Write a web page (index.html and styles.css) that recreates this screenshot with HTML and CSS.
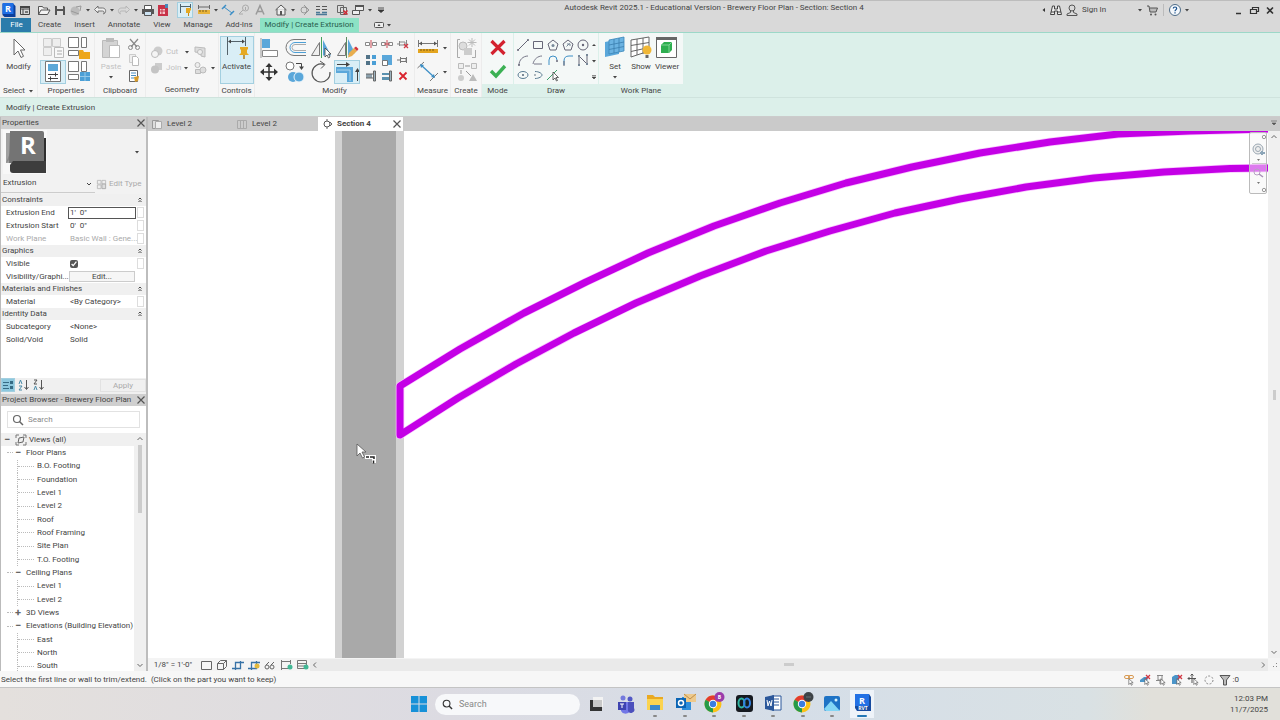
FILE: index.html
```html
<!DOCTYPE html>
<html lang="en">
<head>
  <meta charset="UTF-8">
  <meta name="viewport" content="width=device-width, initial-scale=1.0">
  <title>Autodesk Revit 2025.1 - Educational Version</title>
  <link rel="stylesheet" href="styles.css">
</head>
<body>
  <!-- shared symbols -->
  <svg class="sprite" aria-hidden="true">
    <symbol id="caret" viewBox="0 0 6 6"><path d="M1 2h4L3 4.500z" fill="#444"/></symbol>
    <symbol id="close" viewBox="0 0 10 10"><path d="M1.500 1.500l7 7M8.500 1.500l-7 7" stroke="#555" stroke-width="1.200"/></symbol>
    <symbol id="collapse" viewBox="0 0 6 8"><path d="M1.500 3.500L3 2l1.500 1.500M1.500 6L3 4.500 4.500 6" fill="none" stroke="#444"/></symbol>
    <symbol id="chrome" viewBox="0 0 24 24">
      <circle cx="11" cy="13" r="8.500" fill="#fbc116"/>
      <path d="M11 13L3.600 8.800A8.500 8.500 0 0 1 18.400 8.800z" fill="#e33b2e"/>
      <path d="M11 13L3.600 8.800A8.500 8.500 0 0 0 11 21.500z" fill="#269a48"/>
      <circle cx="11" cy="13" r="4.200" fill="#fff"/><circle cx="11" cy="13" r="3.200" fill="#3b7de0"/>
    </symbol>
    <symbol id="cursor" viewBox="0 0 8 11"><path d="M1 1v8l2-2 1.500 3 1.300-.7L4.500 6.500H7z" fill="#fff" stroke="#444" stroke-width=".8"/></symbol>
  </svg>

  <header class="title-bar">
    <div class="quick-access">
      <button class="app-logo" aria-label="Revit"><svg width="14" height="16" viewBox="0 0 14 16"><path d="M1 2h11l2 2v11H3l-2-2z" fill="#0b3f9c"/><path d="M1 1h11v11H1z" fill="#1f6fe5"/><text x="6.500" y="10" class="logo-letter">R</text></svg></button>
      <button aria-label="Home"><svg viewBox="0 0 16 16"><path d="M3.500 4.500h9v8h-9zM3.500 7h9M6 7v5" fill="none" stroke="#444"/><path d="M3 4h10v2H3z" fill="#444"/><path d="M8 9h3v2H8z" fill="#777"/></svg></button>
      <button class="spaced" aria-label="Open"><svg viewBox="0 0 16 16"><path d="M2.500 12.500v-8h4l1 1.500h4v2M2.500 12.500L5 8h9l-2.500 4.500z" fill="#f3f3f3" stroke="#555"/></svg></button>
      <button aria-label="Save"><svg viewBox="0 0 16 16"><path d="M3 4h9l1 1v8H3z" fill="#555"/><path d="M5 4h6v3H5zM5 9h6v4H5z" fill="#ddd"/></svg></button>
      <button aria-label="Synchronize"><svg viewBox="0 0 16 16"><circle cx="7" cy="9" r="4.500" fill="#bbb"/><path d="M8 5l5-1-1 5M3 9l8 3" fill="none" stroke="#999"/></svg></button>
      <button class="drop" aria-label="Sync options"><svg><use href="#caret"/></svg></button>
      <button aria-label="Undo"><svg viewBox="0 0 16 16"><path d="M6 4L2.500 7.500 6 11V9h4.500c2 0 2 2 1 3 3-1 3-6-1-6H6z" fill="#eee" stroke="#666" stroke-width=".9"/></svg></button>
      <button class="drop" aria-label="Undo list"><svg><use href="#caret"/></svg></button>
      <button aria-label="Redo"><svg viewBox="0 0 16 16"><path d="M10 4l3.500 3.500L10 11V9H5.500c-2 0-2 2-1 3-3-1-3-6 1-6H10z" fill="none" stroke="#b3b3b3" stroke-width=".9"/></svg></button>
      <button class="drop" aria-label="Redo list"><svg><use href="#caret"/></svg></button>
      <button aria-label="Print"><svg viewBox="0 0 16 16"><path d="M4.500 3.500h7v4h-7z" fill="#fff" stroke="#555"/><path d="M2 7h12v5H2z" fill="#555"/><path d="M4.500 9.500h7v4h-7z" fill="#cde3f3" stroke="#555"/></svg></button>
      <button aria-label="Export PDF"><svg viewBox="0 0 16 16"><path d="M2 3h8l2 2v9H2z" fill="#c83248"/><path d="M4 7h5v5H4z" fill="#f4c7cc"/><path d="M9 2h3v4H9z" fill="#4a86b8"/><path d="M6 7v5M4 9h5" stroke="#c83248"/></svg></button>
      <span class="sep"></span>
      <button class="on" aria-label="Activate dimensions"><svg viewBox="0 0 16 16"><path d="M3.500 2v9M13.500 2v4M4 4.500h9" stroke="#4c6470" fill="none"/><path d="M9 6h5v2l-1 1v2H9V9z" fill="#e5a922"/><path d="M11.500 11v3" stroke="#c28a1a"/></svg></button>
      <button class="spaced" aria-label="Measure"><svg viewBox="0 0 16 16"><path d="M2.500 3v4M13.500 3v4M3 5h10" stroke="#666"/><path d="M2 8h12v4H2z" fill="#e8b33a"/><path d="M4 8v2M7 8v2M10 8v2" stroke="#7b5d18"/></svg></button>
      <button class="drop" aria-label="Measure options"><svg><use href="#caret"/></svg></button>
      <button aria-label="Aligned dimension"><svg viewBox="0 0 16 16"><path d="M4 5l8 6" stroke="#3d8fc6"/><path d="M2 7l4-4M10 13l4-4" stroke="#3d8fc6" stroke-width="1.500"/></svg></button>
      <button aria-label="Tag by category"><svg viewBox="0 0 16 16"><circle cx="9.500" cy="6" r="3" fill="none" stroke="#aaa"/><path d="M9.500 5v3M3 12l4-4M3 12h4" stroke="#aaa"/></svg></button>
      <button aria-label="Text"><svg viewBox="0 0 16 16"><path d="M4 12.500L8 3.500l4 9M5.500 9.500h5" fill="none" stroke="#999" stroke-width="1.500"/></svg></button>
      <span class="sep"></span>
      <button aria-label="Default 3D view"><svg viewBox="0 0 16 16"><path d="M2.500 8L8 3l5.500 5M4 7v6h8V7" fill="#eee" stroke="#555"/><path d="M7 9h2v4H7z" fill="#555"/></svg></button>
      <button class="drop" aria-label="View options"><svg><use href="#caret"/></svg></button>
      <button aria-label="Section"><svg viewBox="0 0 16 16"><circle cx="7" cy="8" r="3" fill="none" stroke="#999"/><path d="M7 3l5 5-5 5" fill="none" stroke="#999"/></svg></button>
      <button aria-label="Thin lines"><svg viewBox="0 0 16 16"><path d="M3 4.500h4M9 4.500h5M3 7.500h4M9 7.500h5" stroke="#555"/><path d="M3 10.500h4M9 10.500h5M3 12.500h11" stroke="#4a7896" stroke-width="1.500"/></svg></button>
      <span class="sep"></span>
      <button aria-label="Close inactive views"><svg viewBox="0 0 16 16"><path d="M3.500 3.500h6v7h-6zM6.500 5.500h6v7h-6z" fill="#ddd" stroke="#666"/><path d="M9.500 8.500l4 4M13.500 8.500l-4 4" stroke="#d02a35" stroke-width="1.500"/></svg></button>
      <button aria-label="Switch windows"><svg viewBox="0 0 16 16"><path d="M5.500 3.500h8v5h-8zM2.500 8.500h7v4h-7z" fill="#eee" stroke="#555"/><path d="M5 3h9v2H5z" fill="#555"/></svg></button>
      <button class="drop" aria-label="Window list"><svg><use href="#caret"/></svg></button>
      <button class="drop wide" aria-label="Customize toolbar"><svg viewBox="0 0 8 8"><path d="M1 2h6M1 4h6L4 6.500z" stroke="#333" stroke-width=".8" fill="#333"/></svg></button>
    </div>
    <h1>Autodesk Revit 2025.1 - Educational Version - Brewery Floor Plan - Section: Section 4</h1>
    <div class="account">
      <button class="drop" aria-label="Collapse search"><svg viewBox="0 0 6 6"><path d="M4 1v4L1.500 3z" fill="#333"/></svg></button>
      <button aria-label="Search help"><svg viewBox="0 0 16 16"><path d="M4.500 4h2v3h3V4h2l2 8.500h-4V9h-3v3.500h-4zM3 10h3M10 10h3" fill="#f0f0f0" stroke="#444"/></svg></button>
      <button class="sign-in"><svg viewBox="0 0 16 16"><circle cx="8" cy="6" r="3" fill="none" stroke="#555"/><path d="M6.500 9v1.500L3 12v1.500h10V12l-3.500-1.500V9" fill="none" stroke="#555"/></svg>Sign In</button>
      <button class="drop" aria-label="Account menu"><svg><use href="#caret"/></svg></button>
      <button aria-label="App store"><svg viewBox="0 0 16 16"><path d="M3 4h2l1 6h6l1.500-4H6" fill="#bbb" stroke="#555"/><circle cx="7" cy="12.500" r="1" fill="#555"/><circle cx="11.500" cy="12.500" r="1" fill="#555"/></svg></button>
      <span class="sep line"></span>
      <button aria-label="Help"><svg viewBox="0 0 16 16"><circle cx="8" cy="8" r="5.500" fill="#f4f8fc" stroke="#4d6b86"/><path d="M6.300 6.500c0-2 3.400-2 3.400 0 0 1.300-1.700 1-1.700 2.700M8 10.200v1.300" fill="none" stroke="#174f8c" stroke-width="1.200"/></svg></button>
      <button class="drop" aria-label="Help menu"><svg><use href="#caret"/></svg></button>
      <div class="window-buttons">
        <button aria-label="Minimize"><svg viewBox="0 0 16 16"><path d="M6 11.500h5" stroke="#333" stroke-width="1.500"/></svg></button>
        <button aria-label="Restore"><svg viewBox="0 0 16 16"><path d="M6.500 7V5.500h6v4H11M4.500 7.500h6v4h-6z" fill="none" stroke="#333" stroke-width="1.200"/></svg></button>
        <button aria-label="Close"><svg viewBox="0 0 16 16"><path d="M5 5.500l6 6M11 5.500l-6 6" stroke="#333" stroke-width="1.600"/></svg></button>
      </div>
    </div>
  </header>

  <nav class="ribbon-tabs">
    <button class="file">File</button>
    <button>Create</button>
    <button>Insert</button>
    <button>Annotate</button>
    <button>View</button>
    <button>Manage</button>
    <button>Add-Ins</button>
    <button class="active">Modify | Create Extrusion</button>
    <button class="ribbon-toggle" aria-label="Minimize ribbon"><svg viewBox="0 0 18 8"><rect x="1.500" y="1.500" width="9" height="5" rx="1" fill="#eee" stroke="#555"/><path d="M4.500 5L6 3l1.500 2zM14 3h4l-2 2.500z" fill="#444"/></svg></button>
  </nav>

  <section class="ribbon">
    <div class="panel select-panel">
      <div class="tools">
        <button class="big"><svg viewBox="0 0 26 24"><path d="M8 3v16l4-4 3 6.500 2.500-1.200L14.500 14H19z" fill="#fff" stroke="#666"/></svg>Modify</button>
      </div>
      <h2>Select <svg class="mini"><use href="#caret"/></svg></h2>
    </div>

    <div class="panel">
      <div class="tools cols-2">
        <button aria-label="Type properties"><svg viewBox="0 0 26 24"><path d="M3.500 2.500h8v8h-8zM12.500 2.500h8v8h-8zM3.500 11.500h8v8h-8z" fill="#eee" stroke="#ccc"/><path d="M14.500 11.500h9v10h-9z" fill="#f8f8f8" stroke="#bbb"/><path d="M17 15h5M17 18h5" stroke="#aaa"/></svg></button>
        <button aria-label="Family category"><svg viewBox="0 0 26 24"><path d="M2.500 1.500h10v10h-10zM15.500 1.500h5v10h-5zM2.500 14.500h10v5h-10z" fill="#fff" stroke="#777"/><path d="M13 14h4l1 2h6v7H13z" fill="#eda71b"/></svg></button>
        <button class="on" aria-label="Properties"><svg viewBox="0 0 26 24"><path d="M5.500 1.500h15v20h-15z" fill="#fff" stroke="#777"/><path d="M8 4h10v7H8z" fill="#5ba8d8"/><path d="M8 14.500h10M8 18.500h10M15.500 12.500v4M10.500 16.500v4" stroke="#444"/></svg></button>
        <button aria-label="Family types"><svg viewBox="0 0 26 24"><path d="M2.500 1.500h10v10h-10zM15.500 1.500h5v10h-5zM2.500 14.500h10v5h-10z" fill="#fff" stroke="#777"/><path d="M14 12h10v9H14z" fill="#4b9fd6"/><path d="M19 12v9M14 16.500h10" stroke="#94c8e8"/></svg></button>
      </div>
      <h2>Properties</h2>
    </div>

    <div class="panel clipboard">
      <div class="tools">
        <button class="big muted"><svg viewBox="0 0 26 24"><path d="M4.500 4.500h15v17h-15z" fill="#d4d4d4" stroke="#bbb"/><path d="M8 2h8v4H8z" fill="#bbb"/><path d="M11.500 9.500h10v12h-10z" fill="#fff" stroke="#bbb"/></svg>Paste<svg class="mini"><use href="#caret"/></svg></button>
        <div class="stack">
          <button aria-label="Cut"><svg viewBox="0 0 16 16"><path d="M4 3l7 8M12 3l-7 8" stroke="#888" stroke-width="1.200"/><circle cx="4.500" cy="11.500" r="2" fill="none" stroke="#888"/><circle cx="11.500" cy="11.500" r="2" fill="none" stroke="#888"/></svg></button>
          <button aria-label="Copy"><svg viewBox="0 0 16 16"><path d="M3.500 2.500h6v8h-6z" fill="#eee" stroke="#ccc"/><path d="M6.500 4.500h4l2 2v7h-6z" fill="#fff" stroke="#bbb"/></svg></button>
          <button aria-label="Match type"><svg viewBox="0 0 16 16"><path d="M3.500 2.500h8v11h-8z" fill="#fff" stroke="#666"/><path d="M5 5h5M5 7.500h5M5 10h3" stroke="#4b8fc0"/><path d="M8 9l5-1-1 5-3 1z" fill="#d79b2a"/></svg></button>
        </div>
      </div>
      <h2>Clipboard</h2>
    </div>

    <div class="panel geometry">
      <div class="tools rows">
        <div class="tool-row muted">
          <button class="labelled"><svg viewBox="0 0 16 16"><circle cx="9" cy="7" r="4.500" fill="#ccc"/><circle cx="6" cy="10" r="3.500" fill="#f4f4f4" stroke="#bbb"/></svg>Cut</button>
          <button class="drop" aria-label="Cut options"><svg><use href="#caret"/></svg></button>
          <button aria-label="Cope"><svg viewBox="0 0 16 16"><path d="M3 3l10 1v9l-4-1V9L3 8z" fill="#ddd" stroke="#bbb"/><circle cx="8" cy="8" r="2.500" fill="#eee" stroke="#bbb"/></svg></button>
        </div>
        <div class="tool-row muted">
          <button class="labelled"><svg viewBox="0 0 16 16"><path d="M6 3h7v7H6z" fill="#ccc"/><circle cx="6" cy="9.500" r="4" fill="#c4c4c4"/></svg>Join</button>
          <button class="drop" aria-label="Join options"><svg><use href="#caret"/></svg></button>
          <button aria-label="Split face"><svg viewBox="0 0 16 16"><circle cx="5.500" cy="5" r="2.500" fill="#eee" stroke="#bbb"/><path d="M3.500 9.500h5v4h-5z" fill="#ddd" stroke="#bbb"/><circle cx="11" cy="10" r="3" fill="#ddd" stroke="#bbb"/></svg></button>
          <button class="drop" aria-label="Split options"><svg><use href="#caret"/></svg></button>
        </div>
      </div>
      <h2>Geometry</h2>
    </div>

    <div class="panel controls-panel">
      <div class="tools">
        <button class="big on"><svg viewBox="0 0 26 24"><path d="M3.500 1v18M21.500 1v9M5 5.500h15" stroke="#55636b" fill="none"/><path d="M4 5.500l3-2v4zM21 5.500l-3-2v4z" fill="#444"/><path d="M16 11h8v2l-1 1v3l2 2H15l2-2v-3l-1-1z" fill="#e5a922"/><path d="M20 19v4" stroke="#b07e17" stroke-width="1.500"/></svg>Activate</button>
      </div>
      <h2>Controls</h2>
    </div>

    <div class="panel modify-panel">
      <div class="tools">
        <div class="cols-4">
          <button aria-label="Align"><svg viewBox="0 0 26 24"><path d="M5 2v20" stroke="#999"/><path d="M6 3h8v9H6z" fill="#5aa7da"/><path d="M6.500 14.500h15v6h-15z" fill="#fff" stroke="#888"/></svg></button>
          <button aria-label="Offset"><svg viewBox="0 0 26 24"><path d="M24 3.500H12a8 8 0 0 0 0 16h12" fill="none" stroke="#777"/><path d="M24 6.500H13a5 5 0 0 0 0 10h11" fill="none" stroke="#4b9fd6"/><path d="M24 8.500H13a3 3 0 0 0 0 6h11" fill="none" stroke="#aaa"/></svg></button>
          <button aria-label="Mirror pick axis"><svg viewBox="0 0 26 24"><path d="M3.500 19.500l8-13v13z" fill="#eee" stroke="#777"/><path d="M15 19.500V4l8 15.500z" fill="#5aa7da"/><path d="M13.500 1v21" stroke="#44a05b"/><path d="M17 12v9l2-2 1.500 3 1.500-1-1.500-3H23z" fill="#fff" stroke="#444" stroke-width=".8"/></svg></button>
          <button aria-label="Mirror draw axis"><svg viewBox="0 0 26 24"><path d="M3.500 19.500l8-13v13z" fill="#eee" stroke="#777"/><path d="M14 19.500V3l7 14z" fill="#5aa7da"/><path d="M12.500 1v21" stroke="#5a8a60"/><path d="M20 12l3 3-5 5-4 1.500 1-4.500z" fill="#e8ad4e"/><path d="M20 12l3 3 1.500-2-2.500-2.500z" fill="#d4313b"/></svg></button>
          <button aria-label="Move"><svg viewBox="0 0 26 24"><path d="M13 5v14M6 12h14" stroke="#333" stroke-width="1.500"/><path d="M13 3l3.500 4h-7zM13 21l3.500-4h-7zM4 12l4-3.500v7zM22 12l-4-3.500v7z" fill="#333"/></svg></button>
          <button aria-label="Copy"><svg viewBox="0 0 26 24"><circle cx="8" cy="6" r="4" fill="#fff" stroke="#777"/><path d="M14 3.500h5.500V7" fill="none" stroke="#444"/><path d="M17 6.500h5L19.500 10z" fill="#444"/><circle cx="11" cy="17" r="5" fill="#5aa7da"/><circle cx="17" cy="17" r="5" fill="#5aa7da" stroke="#e8f4fb"/></svg></button>
          <button aria-label="Rotate"><svg viewBox="0 0 26 24"><path d="M16 4.500a9 9 0 1 0 6 7.500" fill="none" stroke="#555" stroke-width="1.200"/><path d="M12 1l5 3.500-4 4" fill="none" stroke="#555"/></svg></button>
          <button class="on" aria-label="Trim or extend to corner"><svg viewBox="0 0 26 24"><path d="M3 4.500h10M23.500 11v10" stroke="#444"/><path d="M2 7h17v15h-6v-9H2z" fill="#5aa7da"/><path d="M3 10h13v11" fill="none" stroke="#abd5ed"/><path d="M12 2l4 2.500-4 2.500zM21 12l2.500-4 2.500 4z" fill="#444"/></svg></button>
        </div>
        <div class="cols-3">
          <button aria-label="Split element"><svg viewBox="0 0 16 16"><path d="M2.500 6.500h4v3h-4zM9.500 6.500h4v3h-4z" fill="#fff" stroke="#888"/><path d="M8 4v8" stroke="#cc4a55"/></svg></button>
          <button aria-label="Split with gap"><svg viewBox="0 0 16 16"><path d="M2.500 6.500h4v3h-4zM9.500 6.500h4v3h-4z" fill="#fff" stroke="#888"/><path d="M8 4v8M5 8h6" stroke="#cc4a55"/></svg></button>
          <button aria-label="Unpin"><svg viewBox="0 0 16 16"><path d="M4.500 5v5M5 6h5v3H5M11.500 4v6M2 8h3" fill="none" stroke="#888"/><path d="M9 8l4 4M13 8l-4 4" stroke="#d13743" stroke-width="1.300"/></svg></button>
          <button aria-label="Array"><svg viewBox="0 0 16 16"><path d="M3 3h4v4H3zM3 9h4v4H3z" fill="#527388"/><path d="M9 3h4v4H9zM9 9h4v4H9z" fill="#4b9fd6"/></svg></button>
          <button aria-label="Scale"><svg viewBox="0 0 16 16"><path d="M3 3h10v10H3z" fill="#5aa7da"/><path d="M3.500 8.500h5v5h-5z" fill="#fff" stroke="#777"/></svg></button>
          <button aria-label="Pin"><svg viewBox="0 0 16 16"><path d="M5.500 5v6M6 6.500h5v3H6M11.500 5v6M2 8h3" fill="none" stroke="#777"/></svg></button>
          <button aria-label="Trim single"><svg viewBox="0 0 16 16"><path d="M3 6h6v4H3z" fill="#8da1ad"/><path d="M3 6h8M3 10h8" stroke="#666"/><path d="M10.500 3h2v10h-2z" fill="#9db3bf" stroke="#666"/></svg></button>
          <button aria-label="Trim multiple"><svg viewBox="0 0 16 16"><path d="M3 5h7v2H3zM3 9h7v3H3z" fill="#5b91af"/><path d="M10.500 3h2v10h-2z" fill="#9db3bf" stroke="#666"/></svg></button>
          <button aria-label="Delete"><svg viewBox="0 0 16 16"><path d="M4.500 4.500l7 7M11.500 4.500l-7 7" stroke="#d9232e" stroke-width="1.800"/></svg></button>
        </div>
      </div>
      <h2>Modify</h2>
    </div>

    <div class="panel measure">
      <div class="tools rows">
        <div class="tool-row">
          <button aria-label="Measure between"><svg viewBox="0 0 26 24"><path d="M3.500 4v7M22.500 4v7M4 7.500h18" stroke="#777"/><path d="M4 7.500l3-2v4zM22 7.500l-3-2v4z" fill="#555"/><path d="M3 13h20v4H3z" fill="#e4a51f"/><path d="M6 13v2M9 13v2M12 13v2M15 13v2M18 13v2" stroke="#7c5a12"/></svg></button>
          <button class="drop" aria-label="Measure menu"><svg><use href="#caret"/></svg></button>
        </div>
        <div class="tool-row">
          <button aria-label="Dimension"><svg viewBox="0 0 26 24"><path d="M6 5l13 12" stroke="#3d8fc6" stroke-width="1.300"/><path d="M2.500 8L9 2M15 21l8-8" stroke="#777"/><path d="M5 4l4 1-3 3zM20 18l-4-1 3-3z" fill="#3d8fc6"/></svg></button>
          <button class="drop" aria-label="Dimension menu"><svg><use href="#caret"/></svg></button>
        </div>
      </div>
      <h2>Measure</h2>
    </div>

    <div class="panel create-panel">
      <div class="tools rows">
        <button aria-label="Create group"><svg viewBox="0 0 26 24"><path d="M7 3.500H4.500v18H7M19 21.500h3.500V14" fill="none" stroke="#aaa"/><circle cx="10" cy="10" r="4" fill="#ddd" stroke="#bbb"/><path d="M11 12h8v7h-8z" fill="#ccc"/><path d="M19 2v9M14.500 6.500h9M16 3.500l6 6M22 3.500l-6 6" stroke="#bbb"/></svg></button>
        <button aria-label="Create similar"><svg viewBox="0 0 26 24"><path d="M5.500 3.500h5v5h-5zM18.500 3.500h5v5h-5z" fill="#eee" stroke="#bbb"/><path d="M12 6h5M8 10v4M13 11l5 5" stroke="#999"/><circle cx="8" cy="18" r="3" fill="#ccc"/><path d="M20 14l4 7h-8z" fill="#bbb"/></svg></button>
      </div>
      <h2>Create</h2>
    </div>

    <div class="panel context mode">
      <div class="tools rows">
        <button aria-label="Cancel edit mode"><svg viewBox="0 0 26 24"><path d="M6.500 5l13 13M19.500 5l-13 13" stroke="#d3222f" stroke-width="3.200"/></svg></button>
        <button aria-label="Finish edit mode"><svg viewBox="0 0 26 24"><path d="M6 11l5 5L20 6" fill="none" stroke="#3bb154" stroke-width="3.400"/></svg></button>
      </div>
      <h2>Mode</h2>
    </div>

    <div class="panel context draw">
      <div class="tools">
        <div class="draw-gallery">
          <button aria-label="Line"><svg viewBox="0 0 14 14"><path d="M2 12L12 2" stroke="#667"/><circle cx="2" cy="12" r="1" fill="#667"/><circle cx="12" cy="2" r="1" fill="#667"/></svg></button>
          <button aria-label="Rectangle"><svg viewBox="0 0 14 14"><path d="M2.500 3.500h9v7h-9z" fill="none" stroke="#667"/></svg></button>
          <button aria-label="Inscribed polygon"><svg viewBox="0 0 14 14"><path d="M7 2l5 4-2 6H4L2 6z" fill="none" stroke="#667"/><circle cx="7" cy="7.500" r="1.500" fill="#789"/></svg></button>
          <button aria-label="Circumscribed polygon"><svg viewBox="0 0 14 14"><path d="M7 2l5 4-2 6H4L2 6z" fill="none" stroke="#667"/><path d="M5.500 8.500l3-3M6 6h3v2" fill="none" stroke="#789"/></svg></button>
          <button aria-label="Circle"><svg viewBox="0 0 14 14"><circle cx="7" cy="7" r="5" fill="none" stroke="#667"/><circle cx="7" cy="7" r="1.200" fill="#667"/></svg></button>
          <button aria-label="Start-end-radius arc"><svg viewBox="0 0 14 14"><path d="M3 12c0-5 4-9 9-9" fill="none" stroke="#778"/><circle cx="3" cy="12" r="1" fill="#667"/></svg></button>
          <button aria-label="Center-ends arc"><svg viewBox="0 0 14 14"><path d="M2 11c1-5 5-8 9-8M3 11h8" fill="none" stroke="#778"/></svg></button>
          <button aria-label="Tangent end arc"><svg viewBox="0 0 14 14"><path d="M3 12V7a4 4 0 0 1 8 0" fill="none" stroke="#3d8fc6"/><circle cx="11" cy="8" r="1" fill="#667"/></svg></button>
          <button aria-label="Fillet arc"><svg viewBox="0 0 14 14"><path d="M3 12V8q0-5 5-5h4" fill="none" stroke="#3d8fc6"/><path d="M3 8v5" stroke="#667"/></svg></button>
          <button aria-label="Spline"><svg viewBox="0 0 14 14"><path d="M3 12V3l8 8V2" fill="none" stroke="#667" stroke-linejoin="round"/><path d="M2 11h2v2H2zM2 2h2v2H2zM10 10h2v2h-2zM10 1h2v2h-2z" fill="#789"/></svg></button>
          <button aria-label="Ellipse"><svg viewBox="0 0 14 14"><ellipse cx="7" cy="7" rx="5" ry="3.500" fill="none" stroke="#5a7c93"/><circle cx="7" cy="7" r="1" fill="#567"/></svg></button>
          <button aria-label="Partial ellipse"><svg viewBox="0 0 14 14"><path d="M4 3.500c4 0 7 2 7 3.500s-3 3.500-7 3.500" fill="none" stroke="#5a7c93"/><circle cx="4" cy="7" r=".8" fill="#567"/></svg></button>
          <button aria-label="Pick lines"><svg viewBox="0 0 14 14"><path d="M1 12l10-10" stroke="#3fa06b"/><path d="M7 4v8l2-2 1.500 3 1-.5L10 9.500h2.500z" fill="#fff" stroke="#444" stroke-width=".8"/></svg></button>
        </div>
        <div class="gallery-scroll">
          <button aria-label="Scroll up"><svg viewBox="0 0 6 6"><path d="M1 4h4L3 2z" fill="#444"/></svg></button>
          <button aria-label="Scroll down"><svg><use href="#caret"/></svg></button>
          <button aria-label="More"><svg viewBox="0 0 6 6"><path d="M1 1.500h4M1 3h4L3 5z" fill="#444" stroke="#444" stroke-width=".6"/></svg></button>
        </div>
      </div>
      <h2>Draw</h2>
    </div>

    <div class="panel context work-plane">
      <div class="tools">
        <button class="big"><svg viewBox="0 0 26 24"><path d="M3 6l14-3v15L3 21z" fill="#5aa7da"/><path d="M7 4l15-3v14L7 18z" fill="#6bb3e2" stroke="#3a86ba" stroke-width=".8"/><path d="M12 3v14M17 2v14M7 9l15-3M7 13.500l15-3" stroke="#3a7eae" stroke-width=".8"/></svg>Set<svg class="mini"><use href="#caret"/></svg></button>
        <button class="big"><svg viewBox="0 0 26 24"><path d="M3 4l18-3v14L3 21zM9 3v16M15 2v16M3 9.500l18-3M3 15.500l18-4" fill="#fff" stroke="#666"/><circle cx="19" cy="14" r="4.500" fill="#f0b736"/><path d="M17.500 19h3v3h-3z" fill="#666"/></svg>Show</button>
        <button class="big"><svg viewBox="0 0 26 24"><path d="M2.500 1.500h20v20h-20z" fill="#fff" stroke="#666"/><path d="M2 1h21v3H2z" fill="#666"/><path d="M7 9l3-3h8v8l-3 3H7z" fill="#2eae50"/><path d="M7 9h8v8M15 9l3-3" fill="none" stroke="#7ed695"/></svg>Viewer</button>
      </div>
      <h2>Work Plane</h2>
    </div>
  </section>

  <div class="options-bar">Modify | Create Extrusion</div>

  <main>
    <aside>
      <section class="properties">
        <header class="dock-title">Properties <button aria-label="Close properties"><svg><use href="#close"/></svg></button></header>
        <div class="type-preview">
          <svg width="44" height="44" viewBox="0 0 44 44"><path d="M0 0h44v44H0z" fill="#f8f8f8"/><path d="M3 3h5v30H3z" fill="#a0a0a0"/><path d="M3 33L8 28v-8z" fill="#888"/><path d="M36 8h7v35h-7z" fill="#2f2f2f"/><path d="M7 1h32a2 2 0 0 1 2 2v30H6z" fill="#747474"/><path d="M10 31h33v12H10a3 3 0 0 1-3-3v-5z" fill="#3d3d3d"/><text x="25" y="24" class="preview-letter">R</text></svg>
          <svg class="mini"><use href="#caret"/></svg>
        </div>
        <div class="type-row">
          <select aria-label="Family type"><option>Extrusion</option></select>
          <button disabled><svg viewBox="0 0 12 12"><path d="M1.500 1.500h4v4h-4zM6.500 1.500h4v4h-4zM1.500 6.500h4v4h-4z" fill="#eee" stroke="#bbb"/><path d="M6.500 5.500h4v5h-4z" fill="#ddd" stroke="#aaa"/></svg>Edit Type</button>
        </div>
        <table>
          <colgroup><col class="name-col"><col><col class="link-col"></colgroup>
          <tr class="group"><th colspan="2">Constraints</th><td><svg><use href="#collapse"/></svg></td></tr>
          <tr><th><label for="extrusion-end">Extrusion End</label></th><td class="field"><input id="extrusion-end" class="focused" type="text" value="1'  0&quot;"></td><td><i></i></td></tr>
          <tr><th><label for="extrusion-start">Extrusion Start</label></th><td class="field"><input id="extrusion-start" type="text" value="0'  0&quot;"></td><td><i></i></td></tr>
          <tr class="disabled"><th>Work Plane</th><td>Basic Wall : Gene...</td><td><i></i></td></tr>
          <tr class="group"><th colspan="2">Graphics</th><td><svg><use href="#collapse"/></svg></td></tr>
          <tr><th><label for="visible">Visible</label></th><td><input id="visible" type="checkbox" checked></td><td><i></i></td></tr>
          <tr><th>Visibility/Graphi...</th><td class="field"><button>Edit...</button></td><td></td></tr>
          <tr class="group"><th colspan="2">Materials and Finishes</th><td><svg><use href="#collapse"/></svg></td></tr>
          <tr><th>Material</th><td>&lt;By Category&gt;</td><td><i></i></td></tr>
          <tr class="group"><th colspan="2">Identity Data</th><td><svg><use href="#collapse"/></svg></td></tr>
          <tr><th>Subcategory</th><td>&lt;None&gt;</td><td></td></tr>
          <tr><th>Solid/Void</th><td>Solid</td><td></td></tr>
        </table>
        <footer>
          <button class="sort on" aria-label="Group by category"><svg viewBox="0 0 14 14"><path d="M2 4.500h6M2 7.500h5M2 10.500h6" stroke="#356b84"/><path d="M9 3h3v3H9zM9 8h3v3H9z" fill="#356b84"/></svg></button>
          <button class="sort" aria-label="Sort ascending"><svg viewBox="0 0 14 14"><path d="M3 6l1.500-4L6 6M3 8h3l-3 4h3" fill="none" stroke="#4a8ba8"/><path d="M10.500 2v9M8.500 9l2 2.500 2-2.500" fill="none" stroke="#555"/></svg></button>
          <button class="sort" aria-label="Sort descending"><svg viewBox="0 0 14 14"><path d="M3 2h3L3 6h3" fill="none" stroke="#555"/><path d="M3 12l1.500-4L6 12" fill="none" stroke="#4a8ba8"/><path d="M10.500 2v9M8.500 9l2 2.500 2-2.500" fill="none" stroke="#555"/></svg></button>
          <button class="apply" disabled>Apply</button>
        </footer>
      </section>

      <section class="browser">
        <header class="dock-title">Project Browser - Brewery Floor Plan <button aria-label="Close project browser"><svg><use href="#close"/></svg></button></header>
        <label class="browser-search">
          <svg viewBox="0 0 12 12"><circle cx="5" cy="5" r="3.500" fill="none" stroke="#666" stroke-width="1.200"/><path d="M7.500 7.500l3.500 3.500" stroke="#666" stroke-width="1.500"/></svg>
          <input type="search" placeholder="Search" aria-label="Search project browser">
        </label>
        <div class="tree-wrap">
          <ul class="tree">
            <li class="root"><b>−</b><svg viewBox="0 0 12 12"><path d="M1 4V1h3M8 1h3v3M11 8v3H8M4 11H1V8" fill="none" stroke="#777"/><path d="M4 4l5-1-1 5-5 1z" fill="#eee" stroke="#666"/></svg>Views (all)</li>
            <li class="branch"><b>−</b>Floor Plans</li>
            <li class="leaf">B.O. Footing</li>
            <li class="leaf">Foundation</li>
            <li class="leaf">Level 1</li>
            <li class="leaf">Level 2</li>
            <li class="leaf">Roof</li>
            <li class="leaf">Roof Framing</li>
            <li class="leaf">Site Plan</li>
            <li class="leaf">T.O. Footing</li>
            <li class="branch"><b>−</b>Ceiling Plans</li>
            <li class="leaf">Level 1</li>
            <li class="leaf">Level 2</li>
            <li class="branch"><b>+</b>3D Views</li>
            <li class="branch"><b>−</b>Elevations (Building Elevation)</li>
            <li class="leaf">East</li>
            <li class="leaf">North</li>
            <li class="leaf">South</li>
          </ul>
          <div class="scrollbar">
            <svg viewBox="0 0 10 10"><path d="M2.500 6L5 3.500 7.500 6" fill="none" stroke="#666"/></svg>
            <span class="thumb"></span>
            <svg viewBox="0 0 10 10"><path d="M2.500 4L5 6.500 7.500 4" fill="none" stroke="#666"/></svg>
          </div>
        </div>
      </section>
    </aside>

    <section class="views">
      <nav class="view-tabs">
        <button><svg viewBox="0 0 12 12"><path d="M1.500 2.500h6v8h-6z" fill="#ddd" stroke="#999"/><path d="M4.500 3.500h6v7h-6z" fill="#eee" stroke="#aaa"/></svg>Level 2</button>
        <button><svg viewBox="0 0 12 12"><path d="M1.500 2.500h9v8h-9z" fill="#ccc" stroke="#aaa"/><path d="M4.500 2v9M7.500 2v9" stroke="#aaa"/></svg>Level 2</button>
        <button class="active"><svg viewBox="0 0 12 12"><circle cx="6" cy="6" r="3" fill="none" stroke="#555"/><path d="M6 1v2M6 9v2M9 4l2 2-2 2" fill="none" stroke="#666"/></svg>Section 4<span class="tab-close"><svg><use href="#close"/></svg></span></button>
        <svg class="tab-list" viewBox="0 0 8 8"><path d="M1 2h6M2 4h4L4 6z" fill="#555" stroke="#555" stroke-width=".6"/></svg>
      </nav>
      <div class="canvas-row">
        <div class="canvas">
          <svg class="drawing" viewBox="148 131 1120 527" preserveAspectRatio="xMinYMin slice">
            <!-- wall in section -->
            <path d="M335 131h69v527h-69z" fill="#d2d2d2"/>
            <path d="M342 131h54v527h-54z" fill="#a9a9a9"/>
            <!-- extrusion sketch -->
            <path d="M1268 129L1190 131 1118 134 1050 142 980 153 912 167 846 183 780 203 714 226 648 253 586 282 524 313 460 349 400 386V435L458 398 516 364 574 333 636 303 700 276 766 251 830 231 895 213 960 199 1026 187 1094 178 1164 172 1230 168.500 1280 168" fill="none" stroke="#f9c3ff" stroke-width="8.500" stroke-linejoin="round"/>
            <path d="M1268 129L1190 131 1118 134 1050 142 980 153 912 167 846 183 780 203 714 226 648 253 586 282 524 313 460 349 400 386V435L458 398 516 364 574 333 636 303 700 276 766 251 830 231 895 213 960 199 1026 187 1094 178 1164 172 1230 168.500 1280 168" fill="none" stroke="#c400e6" stroke-width="7" stroke-linejoin="round"/>
            <!-- trim cursor -->
            <path d="M357 444v12l3-3 2.500 5 2-1-2.500-5h4z" fill="#fff" stroke="#555" stroke-width=".8"/>
            <path d="M365 457h9v6" fill="none" stroke="#fff" stroke-width="4"/>
            <path d="M366 457h3M370 457h4v2M373.500 460.500v3" fill="none" stroke="#222" stroke-width="1.500"/>
          </svg>
          <div class="nav-bar">
            <svg viewBox="0 0 18 60"><circle cx="14" cy="4" r="1.700" fill="none" stroke="#999"/><circle cx="8" cy="16" r="5" fill="#eee" stroke="#9aa7b2"/><circle cx="8" cy="16" r="2.500" fill="none" stroke="#9aa7b2"/><path d="M10 20h5M12 18v4" stroke="#8da6b8" stroke-width="2"/><path d="M7 26h3l-1.500 2zM7 49h3l-1.500 2z" fill="#777"/><path d="M2 30.500h14" stroke="#ccc"/><circle cx="7" cy="39" r="3" fill="none" stroke="#b7a1c4"/><path d="M9 41l4 3" stroke="#a992b8" stroke-width="1.500"/><circle cx="14" cy="57" r="1.700" fill="none" stroke="#999"/></svg>
          </div>
        </div>
        <div class="scrollbar canvas-scroll">
          <svg viewBox="0 0 10 10"><path d="M2.500 6L5 3.500 7.500 6" fill="none" stroke="#666"/></svg>
          <span class="grip"></span>
          <svg viewBox="0 0 10 10"><path d="M2.500 4L5 6.500 7.500 4" fill="none" stroke="#666"/></svg>
        </div>
      </div>
      <div class="view-controls">
        <button class="scale">1/8" = 1'-0"</button>
        <button aria-label="Detail level"><svg viewBox="0 0 16 14"><path d="M3.500 3.500h10v8h-10z" fill="#f6f6f6" stroke="#666"/></svg></button>
        <button aria-label="Visual style"><svg viewBox="0 0 16 14"><path d="M3.500 5.500h6v6h-6zM3.500 5.500l3-3h6v6l-3 3M9.500 5.500l3-3" fill="none" stroke="#666"/></svg></button>
        <button aria-label="Crop view"><svg viewBox="0 0 16 14"><path d="M5.500 12V4.500H14M2 10.500h8.500V3" fill="none" stroke="#3772a6" stroke-width="1.300"/></svg></button>
        <button aria-label="Show crop region"><svg viewBox="0 0 16 14"><path d="M5.500 12V4.500H14M2 10.500h8.500V3" fill="none" stroke="#3772a6" stroke-width="1.300"/><circle cx="11" cy="8" r="2.500" fill="#e2b93c"/></svg></button>
        <button aria-label="Temporary hide"><svg viewBox="0 0 16 14"><circle cx="5" cy="9" r="2" fill="none" stroke="#666"/><circle cx="10" cy="9" r="2" fill="none" stroke="#666"/><path d="M4 7l3-3M9 7l3-3" stroke="#666"/></svg></button>
        <button aria-label="Reveal hidden"><svg viewBox="0 0 16 14"><path d="M3.500 3.500h9M3.500 10.500h7M3.500 2v10M12.500 2v4" fill="none" stroke="#777"/><circle cx="12" cy="9" r="2.500" fill="#42b795"/></svg></button>
        <button aria-label="View properties"><svg viewBox="0 0 16 14"><path d="M3.500 2.500h9v8h-9zM3 5.500h9M3 8h9" fill="none" stroke="#777"/><circle cx="12" cy="9" r="2.500" fill="#42b795"/></svg></button>
        <div class="h-scroll">
          <svg viewBox="0 0 10 10"><path d="M6 2.500L3.500 5 6 7.500" fill="none" stroke="#666"/></svg>
          <span class="grip"></span>
          <svg viewBox="0 0 10 10"><path d="M4 2.500L6.500 5 4 7.500" fill="none" stroke="#666"/></svg>
        </div>
        <svg class="corner" viewBox="0 0 12 12"><path d="M8 4h1v1H8zM5 7h1v1H5zM8 7h1v1H8z" fill="#888"/></svg>
      </div>
    </section>
  </main>

  <footer class="status-bar">
    <p>Select the first line or wall to trim/extend.&nbsp; (Click on the part you want to keep)</p>
    <button aria-label="Select links"><svg viewBox="0 0 16 16"><rect x="3.500" y="3.500" width="5" height="3" rx="1.500" fill="none" stroke="#d99a52"/><rect x="7.500" y="3.500" width="5" height="3" rx="1.500" fill="none" stroke="#d99a52"/><use href="#cursor" x="7" y="6" width="6" height="8"/></svg></button>
    <button aria-label="Select underlay"><svg viewBox="0 0 16 16"><path d="M3 8l4-3h4l-1 5H3z" fill="#4b95c9"/><path d="M9 3l4 4M13 3L9 7" stroke="#d13743" stroke-width="1.300"/><use href="#cursor" x="7" y="6" width="6" height="8"/></svg></button>
    <button aria-label="Select pinned"><svg viewBox="0 0 16 16"><path d="M4 3.500h6M5 4v4h4V4M3 8.500h7M7 9v3" fill="none" stroke="#888"/><use href="#cursor" x="7" y="6" width="6" height="8"/></svg></button>
    <button aria-label="Select by face"><svg viewBox="0 0 16 16"><path d="M3 5l3-2h4v9H3z" fill="#4b95c9"/><path d="M9 3l4 4M13 3L9 7" stroke="#d13743" stroke-width="1.300"/><use href="#cursor" x="7" y="6" width="6" height="8"/></svg></button>
    <button aria-label="Drag on selection"><svg viewBox="0 0 16 16"><path d="M7 2v9M3 6.500h8M5.500 3.500L7 2l1.500 1.500M4.500 5L3 6.500 4.500 8" fill="none" stroke="#555"/><use href="#cursor" x="8" y="6" width="6" height="8"/></svg></button>
    <button aria-label="Background processes"><svg viewBox="0 0 16 16"><circle cx="8" cy="8" r="4" fill="none" stroke="#888" stroke-dasharray="2 1.500"/></svg></button>
    <button class="filter"><svg viewBox="0 0 16 16"><path d="M3 3.500h10L9.500 8v5h-3V8z" fill="#bbb" stroke="#555"/></svg>:0</button>
  </footer>

  <footer class="taskbar">
    <div class="task-items">
      <button class="start" aria-label="Start"><svg viewBox="0 0 24 24"><path d="M4 4h7.500v7.500H4zM12.500 4H20v7.500h-7.500zM4 12.500h7.500V20H4zM12.500 12.500H20V20h-7.500z" fill="#1791d8"/></svg></button>
      <label class="task-search">
        <svg viewBox="0 0 12 12"><circle cx="5" cy="5" r="3.700" fill="none" stroke="#333" stroke-width="1.200"/><path d="M7.700 7.700L11 11" stroke="#333" stroke-width="1.500"/></svg>
        <input type="search" placeholder="Search" aria-label="Search Windows">
      </label>
      <div class="apps">
        <button aria-label="Task view"><svg viewBox="0 0 24 24"><path d="M9 5h10v10H9z" fill="#f3f3f3"/><path d="M6 8h6v7h6v4H6z" fill="#333"/><path d="M9 8h9v7H9z" fill="#c8c8c8"/></svg></button>
        <button aria-label="Teams"><svg viewBox="0 0 24 24"><circle cx="9" cy="6" r="2.500" fill="#7479dd"/><circle cx="16" cy="7" r="2.500" fill="#5157c5"/><path d="M7 10h9v9a5 5 0 0 1-9 0z" fill="#7277e6"/><path d="M14 10h6v6a3 3 0 0 1-6 3z" fill="#4c50bd"/><path d="M4 10h8v8H4z" fill="#3e43b0"/><path d="M6 12h4M8 12v4" stroke="#fff"/></svg></button>
        <button class="running" aria-label="File Explorer"><svg viewBox="0 0 24 24"><path d="M4 4h6l2 2h8v13H4z" fill="#e9a922"/><path d="M4 8h16v11H4z" fill="#fbd34f"/><path d="M7 14h10v5H7z" fill="#3c88c9"/></svg></button>
        <button class="running" aria-label="Outlook"><svg viewBox="0 0 24 24"><path d="M9 6h9v13H9z" fill="#2f8fdc"/><path d="M11 3h12v8H11z" fill="#edc98c"/><path d="M11 3l6 5 6-5" fill="none" stroke="#bd8e4b"/><path d="M3 7h10v10H3z" fill="#0a64b4"/><circle cx="8" cy="12" r="2.500" fill="none" stroke="#fff" stroke-width="1.500"/></svg></button>
        <button class="running" aria-label="Chrome"><svg viewBox="0 0 24 24"><use href="#chrome"/><circle cx="17.500" cy="6" r="5" fill="#9a3cab"/><text x="17.500" y="8" class="badge-letter">B</text></svg></button>
        <button class="running" aria-label="Webex"><svg viewBox="0 0 24 24"><rect x="4" y="4" width="17" height="17" rx="3" fill="#161a20"/><ellipse cx="9.500" cy="12" rx="3" ry="4.500" fill="none" stroke="#2fb5a3" stroke-width="2"/><ellipse cx="15" cy="12" rx="3" ry="4.500" fill="none" stroke="#3482df" stroke-width="2"/></svg></button>
        <button class="running" aria-label="Word"><svg viewBox="0 0 24 24"><path d="M11 5h9v14h-9z" fill="#fff" stroke="#2b579a"/><path d="M13 8h5M13 11h5M13 14h5" stroke="#2b579a"/><path d="M4 6l9-2v16l-9-2z" fill="#2b579a"/><path d="M6 9l1 6 1.500-5L10 15l1-6" fill="none" stroke="#fff"/></svg></button>
        <button class="running" aria-label="Chrome profile 2"><svg viewBox="0 0 24 24"><use href="#chrome"/><circle cx="17.500" cy="6" r="5" fill="#3d4347"/><path d="M15 6h5" stroke="#687176"/></svg></button>
        <button class="running" aria-label="Photos"><svg viewBox="0 0 24 24"><rect x="4" y="5" width="16" height="15" rx="2" fill="#1e73c5"/><path d="M4 18l7-8 9 10H6z" fill="#83d6f5"/><circle cx="16" cy="9" r="1.500" fill="#d6f3ff"/></svg></button>
        <button class="running current" aria-label="Revit"><svg viewBox="0 0 24 24"><path d="M5 3h14l2 3v14H7l-2-3z" fill="#174b9f"/><path d="M5 3h14v12H5z" fill="#2471e4"/><text x="12" y="13" class="logo-letter">R</text><text x="13" y="19" class="rvt">RVT</text></svg></button>
      </div>
    </div>
    <time>12:03 PM<br>11/7/2025</time>
  </footer>
</body>
</html>
```
FILE: styles.css
```css
* {
  box-sizing: border-box;
}

body {
  margin: 0;
  height: 100vh;
  display: flex;
  flex-direction: column;
  overflow: hidden;
  font-family: Roboto, "Open Sans", sans-serif;
  font-size: 8px;
  line-height: 12px;
  color: #444;
  background: #f4f4f4;
}

button, input, select {
  font: inherit;
  color: inherit;
  margin: 0;
  padding: 0;
  border: 0;
  background: none;
}

button {
  display: flex;
  align-items: center;
  justify-content: center;
  white-space: nowrap;
}

h1, h2, p, ul {
  margin: 0;
  padding: 0;
  font-size: inherit;
  font-weight: normal;
}

svg {
  flex: none;
  display: block;
}

.sprite {
  position: absolute;
  width: 0;
  height: 0;
}

.mini {
  width: 6px;
  height: 6px;
}

.logo-letter, .preview-letter, .badge-letter, .rvt {
  font-family: "Open Sans", sans-serif;
  font-weight: bold;
  text-anchor: middle;
  fill: #fff;
}

.logo-letter { font-size: 9px; }
.preview-letter { font-size: 24px; }
.badge-letter, .rvt { font-size: 5px; }

/* title bar */
.title-bar {
  height: 18px;
  display: flex;
  align-items: center;
  background: #d9d9d9;
  border-top: 1px solid #bdbdbd;
}

.title-bar h1 {
  flex: 1;
  text-align: center;
  line-height: 14px;
  padding-bottom: 4px;
  white-space: nowrap;
}

.quick-access, .account, .window-buttons {
  display: flex;
  align-items: center;
}

.title-bar button svg {
  width: 16px;
  height: 16px;
}

.title-bar .app-logo svg {
  width: 17px;
}

.drop, .title-bar .drop {
  width: 8px;
}

.drop svg, .title-bar .drop svg {
  width: 6px;
  height: 6px;
}

.title-bar .wide {
  width: 14px;
}

.title-bar .wide svg {
  width: 8px;
  height: 8px;
}

.quick-access .spaced {
  margin-left: 3px;
}

.sep {
  width: 5px;
}

.sep.line {
  width: 1px;
  height: 12px;
  margin: 0 3px;
  background: #bbb;
}

.on {
  background: #d9eef6;
  outline: 1px solid #a3cfe0;
  outline-offset: -1px;
}

.account {
  width: 240px;
}

.sign-in {
  margin-right: 30px;
  gap: 2px;
}

.window-buttons {
  margin-left: auto;
  padding-right: 2px;
}

/* ribbon */
.ribbon-tabs {
  height: 14px;
  display: flex;
  background: #d9d9d9;
  padding-left: 1px;
}

.ribbon-tabs button {
  padding: 0 6px 0 7px;
}

.ribbon-tabs .file {
  width: 30px;
  color: #fff;
  background: #2b7cab;
}

.ribbon-tabs .active {
  padding: 0 5px;
  margin-left: 1px;
  color: #285c4d;
  background: #8ce2c5;
}

.ribbon-tabs .ribbon-toggle {
  margin-left: 7px;
}

.ribbon-toggle svg {
  width: 18px;
  height: 8px;
}

.ribbon {
  height: 66px;
  display: flex;
  background: #dcf0ea;
  border-top: 1px solid #9cd8c8;
  border-bottom: 1px solid #cfe3dd;
}

.panel {
  width: 57px;
  display: flex;
  flex-direction: column;
  background: #f6f6f6;
  border-right: 1px solid #ececec;
}

.panel h2 {
  display: flex;
  align-items: center;
  justify-content: center;
  gap: 3px;
  height: 14px;
}

.tools {
  height: 51px;
  padding-top: 3px;
  display: flex;
  justify-content: center;
}

.tools svg {
  width: 26px;
  height: 24px;
}

.tools .drop svg, .tools .mini {
  width: 6px;
  height: 6px;
}

.big {
  flex-direction: column;
  justify-content: flex-start;
  height: 48px;
  line-height: 14px;
}

.muted {
  color: #c2c2c2;
}

.cols-2, .cols-4, .cols-3 {
  display: grid;
  align-content: start;
}

.cols-2 { grid-template-columns: 26px 26px; }
.cols-4 { grid-template-columns: repeat(4, 26px); }

.cols-3 {
  grid-template-columns: repeat(3, 16px);
  grid-template-rows: repeat(3, 16px);
}

.cols-3 svg, .stack svg, .geometry button svg {
  width: 16px;
  height: 16px;
}

.select-panel { width: 38px; }
.clipboard { width: 51px; }
.geometry { width: 73px; }
.controls-panel { width: 36px; }
.modify-panel { width: 160px; }
.measure { width: 36px; }
.create-panel { width: 31px; }
.mode { width: 32px; }
.draw { width: 85px; }
.work-plane { width: 85px; }

.modify-panel .tools {
  justify-content: flex-start;
  gap: 3px;
  padding-left: 1px;
}

.clipboard .tools {
  gap: 2px;
}

.rows {
  flex-direction: column;
  justify-content: flex-start;
}

.tool-row {
  display: flex;
  align-items: center;
}

.geometry .rows {
  padding-top: 11px;
  padding-left: 3px;
}

.geometry .labelled {
  width: 32px;
  justify-content: flex-start;
  gap: 1px;
}

.geometry .drop {
  width: 11px;
}

.geometry .drop svg {
  width: 6px;
  height: 6px;
}

.controls-panel .big {
  width: 34px;
}

.context {
  background: #dcf0ea;
  border-color: #dcf0ea;
}

.context .tools {
  background: #f4f8f7;
}

.draw .tools {
  padding: 4px 1px 2px;
  gap: 1px;
}

.draw-gallery {
  display: grid;
  grid-template-columns: repeat(5, 15px);
  grid-auto-rows: 15px;
}

.draw-gallery svg {
  width: 14px;
  height: 14px;
}

.gallery-scroll {
  width: 6px;
  display: grid;
  grid-auto-rows: 16px;
}

.gallery-scroll svg {
  width: 6px;
  height: 6px;
}

.work-plane .big {
  width: 26px;
}

.options-bar {
  height: 18px;
  padding: 4px 6px 2px;
  background: #dcf0ea;
}

/* work area */
main {
  flex: 1;
  min-height: 0;
  display: flex;
  border-top: 1px solid #ccc;
}

aside {
  width: 148px;
  display: flex;
  flex-direction: column;
  border-left: 1px solid #bbb;
  border-right: 2px solid #bdbdbd;
  background: #f2f2f2;
}

.dock-title {
  display: flex;
  align-items: center;
  justify-content: space-between;
  height: 12px;
  padding: 0 0 0 1px;
  background: #cfcfcf;
  white-space: nowrap;
}

.dock-title svg, .tab-close svg {
  width: 10px;
  height: 10px;
}

.type-preview {
  height: 46px;
  display: flex;
  align-items: center;
  justify-content: space-between;
  padding: 0 6px 0 2px;
}

.type-row {
  height: 18px;
  display: flex;
  align-items: center;
  margin-bottom: 1px;
}

.type-row select {
  width: 94px;
  height: 18px;
  padding: 0 0 2px 2px;
  appearance: none;
  border-bottom: 1px solid #ccc;
  background: url("data:image/svg+xml,%3Csvg xmlns='http://www.w3.org/2000/svg' width='6' height='6'%3E%3Cpath d='M1 2l2 2 2-2' fill='none' stroke='%23444'/%3E%3C/svg%3E") no-repeat right 3px center;
}

.type-row button {
  gap: 2px;
  padding-left: 1px;
  color: #aaa;
}

.type-row button svg {
  width: 11px;
  height: 11px;
}

.properties {
  height: 277px;
  display: flex;
  flex-direction: column;
}

.properties table {
  width: 100%;
  table-layout: fixed;
  border-collapse: collapse;
  background: #fff;
}

.name-col { width: 67px; }
.link-col { width: 9px; }

.properties tr {
  height: 13px;
}

.properties tr.group {
  height: 12px;
  background: #f0f0f0;
}

.properties th, .properties td {
  padding: 0;
  line-height: 12px;
  font-weight: normal;
  text-align: left;
  white-space: nowrap;
}

.properties th {
  padding-left: 5px;
}

.properties .group th {
  padding-left: 1px;
}

.properties td {
  padding-left: 2px;
}

.properties .field,
.properties td:last-child {
  padding: 0;
}

.properties td svg {
  width: 6px;
  height: 8px;
}

.properties td i {
  display: block;
  width: 7px;
  height: 11px;
  border: 1px solid #ddd;
}

.properties .disabled {
  color: #aaa;
}

.properties input[type="text"] {
  display: block;
  width: 68px;
  height: 12px;
  padding: 0 2px;
  white-space: pre;
}

.properties input.focused {
  border: 1px solid #555;
  padding: 0 1px;
}

.properties input[type="checkbox"] {
  display: block;
  width: 8px;
  height: 8px;
  accent-color: #555;
}

.properties td button {
  width: 66px;
  height: 11px;
  margin-left: 1px;
  border: 1px solid #ccc;
  background: #f6f6f6;
}

.properties footer {
  flex: 1;
  display: flex;
  align-items: flex-end;
  padding-bottom: 2px;
  background: linear-gradient(#fff 0, #fff 32px, #f0f0f0 32px);
}

.sort {
  width: 15px;
  height: 14px;
}

.sort svg {
  width: 14px;
  height: 14px;
}

.sort.on {
  width: 14px;
  background: #8cc8de;
}

.apply {
  width: 46px;
  height: 13px;
  margin-left: auto;
  border: 1px solid #e2e2e2;
  color: #aaa;
}

.browser {
  flex: 1;
  min-height: 0;
  display: flex;
  flex-direction: column;
  background: #fff;
}

.browser-search {
  height: 17px;
  display: flex;
  align-items: center;
  gap: 4px;
  margin: 5px 6px;
  padding-left: 4px;
  border: 1px solid #e2e2e2;
}

.browser-search svg {
  width: 12px;
  height: 12px;
}

.browser-search input, .task-search input {
  width: 100%;
  outline: none;
}

input::placeholder {
  color: #888;
}

.tree-wrap {
  flex: 1;
  min-height: 0;
  display: flex;
  overflow: hidden;
}

.tree {
  flex: 1;
  height: 240px;
  display: grid;
  grid-auto-rows: 1fr;
  list-style: none;
  white-space: nowrap;
}

.tree li {
  display: flex;
  align-items: center;
}

.tree b {
  width: 10px;
  font-size: 11px;
  text-align: center;
  color: #666;
}

.tree svg {
  width: 12px;
  height: 12px;
  margin: 0 2px 0 3px;
}

.tree .root {
  background: #f0f0f0;
}

.tree .root,
.tree .branch {
  padding-left: 1px;
}

.tree .branch::before {
  content: "";
  width: 6px;
  margin-left: 5px;
  border-top: 1px dotted #bbb;
}

.tree .branch b {
  margin-right: 3px;
}

.tree .leaf {
  margin-left: 16px;
  border-left: 1px dotted #bbb;
}

.tree .leaf::before {
  content: "";
  width: 16px;
  margin-right: 3px;
  border-top: 1px dotted #bbb;
}

.scrollbar {
  width: 12px;
  display: flex;
  flex-direction: column;
  align-items: center;
  background: #f0f0f0;
}

.scrollbar svg {
  width: 10px;
  height: 12px;
}

.scrollbar .thumb {
  width: 4px;
  height: 68px;
  margin-bottom: auto;
  background: #ccc;
}

.views {
  flex: 1;
  min-width: 0;
  display: flex;
  flex-direction: column;
}

.view-tabs {
  height: 14px;
  display: flex;
  background: #cacaca;
}

.view-tabs button {
  width: 85px;
  justify-content: flex-start;
  gap: 4px;
  padding-left: 3px;
}

.view-tabs svg {
  width: 12px;
  height: 12px;
}

.view-tabs .active {
  font-weight: bold;
  background: #fff;
}

.tab-close {
  margin-left: auto;
  padding-right: 1px;
}

.view-tabs .tab-close svg {
  width: 10px;
  height: 10px;
}

.view-tabs .tab-list {
  width: 8px;
  margin: 0 2px 0 auto;
}

.canvas-row {
  flex: 1;
  min-height: 0;
  display: flex;
}

.canvas {
  position: relative;
  flex: 1;
  min-width: 0;
  overflow: hidden;
  background: #fff;
}

.drawing {
  width: 100%;
  height: 100%;
}

/* navigation bar floats over the drawing */
.nav-bar {
  position: absolute;
  top: 1px;
  right: 1px;
  width: 18px;
  height: 62px;
  border: 1px solid #bbb;
  border-radius: 2px;
  background: rgba(245, 245, 245, 0.5);
}

.nav-bar svg {
  width: 18px;
  height: 60px;
}

.canvas-scroll {
  justify-content: space-between;
}

.grip {
  width: 3px;
  height: 10px;
  background: #ccc;
}

.view-controls {
  height: 13px;
  display: flex;
  align-items: center;
  background: #f4f4f4;
}

.view-controls .scale {
  width: 50px;
}

.view-controls button svg {
  width: 16px;
  height: 14px;
}

.h-scroll {
  flex: 1;
  height: 12px;
  display: flex;
  align-items: center;
  justify-content: space-between;
  background: #eaeaea;
}

.h-scroll svg {
  width: 10px;
  height: 10px;
}

.h-scroll .grip {
  width: 10px;
  height: 3px;
}

.corner {
  width: 12px;
  height: 12px;
}

/* status bar */
.status-bar {
  height: 17px;
  display: flex;
  align-items: center;
  padding: 1px 41px 0 0;
  background: #f7f7f7;
  border-bottom: 1px solid #c4c4c4;
}

.status-bar p {
  flex: 1;
  padding-left: 1px;
}

.status-bar svg {
  width: 16px;
  height: 16px;
}

/* windows taskbar */
.taskbar {
  position: relative;
  height: 32px;
  display: flex;
  justify-content: center;
  padding-right: 3px;
  background: linear-gradient(90deg, #e4e0dd, #dcdbe2 35%, #d5dee8 62%, #d9e1e4 85%, #e1e0da 90%);
}

.task-items {
  display: flex;
  align-items: center;
}

.start {
  width: 32px;
}

.taskbar button svg {
  width: 24px;
  height: 24px;
}

.task-search {
  width: 145px;
  height: 21px;
  display: flex;
  align-items: center;
  gap: 6px;
  margin-right: 4px;
  padding: 0 7px;
  border-radius: 11px;
  background: #f7f8fa;
}

.task-search svg {
  width: 11px;
  height: 11px;
}

.task-search input {
  font-size: 9px;
}

.apps {
  width: 290px;
  display: flex;
  justify-content: space-between;
}

.apps button {
  width: 24px;
  height: 28px;
  flex-direction: column;
}

.apps .running::after {
  content: "";
  width: 4px;
  height: 2px;
  border-radius: 1px;
  background: #888;
}

.apps .current {
  background: #eef3f9;
}

.apps .current::after {
  width: 10px;
  background: #2477b5;
}

/* clock sits in the corner so the apps stay centred */
time {
  position: absolute;
  right: 12px;
  top: 5px;
  line-height: 11px;
  text-align: right;
}
```
